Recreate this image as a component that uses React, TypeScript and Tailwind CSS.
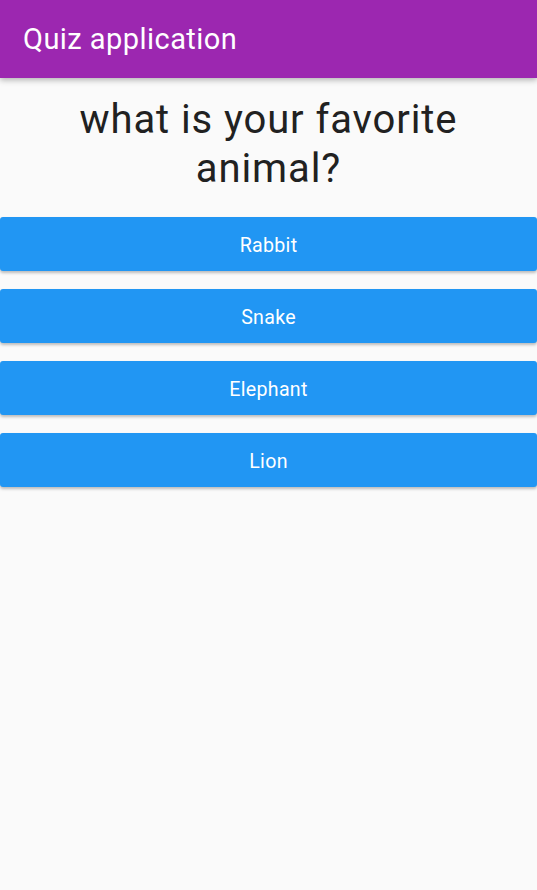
import React from "react";

export default function App() {
    const answers = ["Rabbit", "Snake", "Elephant", "Lion"];

    return (
        <div className="min-h-[890px] bg-[#fafafa]" style={{ fontFamily: "Roboto, sans-serif" }}>
            <header className="relative z-10 h-[78px] bg-[#9c27b0] flex items-center px-[23px] shadow-[0_2px_6px_rgba(0,0,0,0.3)]">
                <h1 className="text-white text-[29px] tracking-[0.45px] leading-none">Quiz application</h1>
            </header>
            <div className="pt-[17px] pb-[24px] px-[14px]">
                <h2 className="mx-auto max-w-[440px] text-center text-[40px] tracking-[0.9px] leading-[49px] text-[#212121]">
                    what is your favorite animal?
                </h2>
            </div>
            <div className="flex flex-col gap-[18px]">
                {answers.map(answer => (
                    <button
                        key={answer}
                        className="w-full h-[54px] pt-[3px] bg-[#2196f3] text-white text-[19.6px] tracking-[0.3px] rounded-[3px] shadow-[0_2px_3px_rgba(0,0,0,0.25)]"
                    >
                        {answer}
                    </button>
                ))}
            </div>
        </div>
    );
}
